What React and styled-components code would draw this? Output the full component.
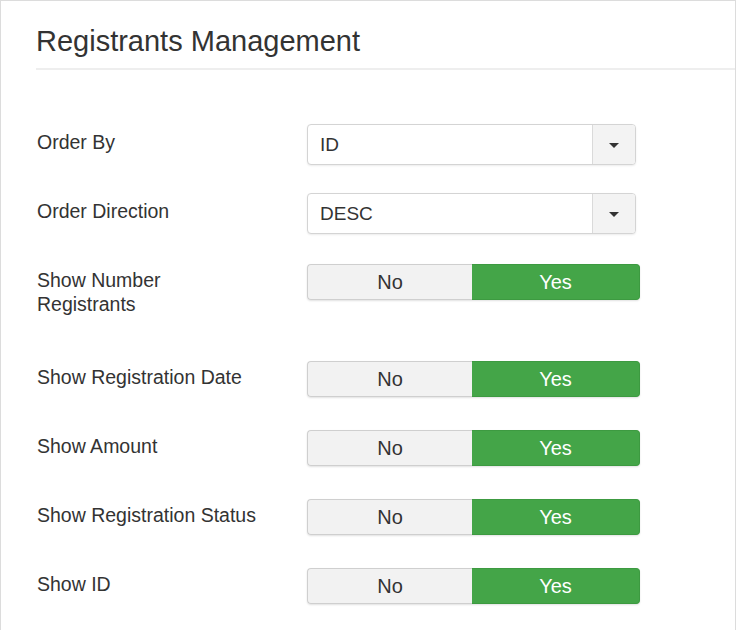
import React from "react";
import styled, { createGlobalStyle } from "styled-components";

const Global = createGlobalStyle`
  html, body { margin: 0; padding: 0; background: #fff; }
  body { font-family: "Liberation Sans", Arial, sans-serif; color: #333; }
`;

const Panel = styled.div`
  box-sizing: border-box;
  width: 736px;
  min-height: 700px;
  border: 1px solid #dcdcdc;
  padding-left: 35px;
`;

const Title = styled.h2`
  margin: 22px 0 0 0;
  padding-bottom: 9px;
  font-size: 29px;
  line-height: 36px;
  font-weight: normal;
  color: #333;
  border-bottom: 2px solid #eee;
`;

const Form = styled.div`
  padding-top: 54px;
  display: flex;
  flex-direction: column;
`;

const Row = styled.div`
  display: flex;
  align-items: flex-start;
  min-height: ${(p) => (p.$tall ? 69 : 41)}px;
  margin-bottom: 28px;
`;

const Label = styled.div`
  width: 271px;
  flex: none;
  box-sizing: border-box;
  padding: 6px ${(p) => (p.$wrap ? 120 : 20)}px 0 1px;
  font-size: 19.5px;
  line-height: 24px;
  color: #333;
`;

const Select = styled.div`
  box-sizing: border-box;
  width: 329px;
  height: 41px;
  display: flex;
  border: 1px solid #d4d4d4;
  border-radius: 4px;
  box-shadow: 0 1px 2px rgba(0, 0, 0, 0.08);
  overflow: hidden;
  background: #fff;
`;

const SelectValue = styled.div`
  flex: 1;
  padding-left: 12px;
  font-size: 19px;
  line-height: 39px;
  color: #333;
`;

const SelectArrow = styled.div`
  width: 42px;
  flex: none;
  background: #f3f3f3;
  border-left: 1px solid #dadada;
  display: flex;
  align-items: center;
  justify-content: center;
`;

const Caret = styled.span`
  width: 0;
  height: 0;
  border-left: 5px solid transparent;
  border-right: 5px solid transparent;
  border-top: 5px solid #333;
  margin-top: 1px;
`;

const Toggle = styled.div`
  margin-top: 2px;
  width: 333px;
  height: 36px;
  display: flex;
  border-radius: 4px;
  box-shadow: 0 1px 2px rgba(0, 0, 0, 0.12);
`;

const ToggleBtn = styled.div`
  box-sizing: border-box;
  width: ${(p) => (p.$on ? 168 : 165)}px;
  display: flex;
  align-items: center;
  justify-content: center;
  font-size: 20px;
  color: ${(p) => (p.$on ? "#fff" : "#333")};
  background: ${(p) => (p.$on ? "#44a548" : "#f2f2f2")};
  border: 1px solid ${(p) => (p.$on ? "#3d9a41" : "#cfcfcf")};
  border-radius: ${(p) => (p.$on ? "0 4px 4px 0" : "4px 0 0 4px")};
  ${(p) => (p.$on ? "border-left: none;" : "border-right: none;")}
`;

function SelectField({ value }) {
  return (
    <Select>
      <SelectValue>{value}</SelectValue>
      <SelectArrow>
        <Caret />
      </SelectArrow>
    </Select>
  );
}

function YesNo() {
  return (
    <Toggle>
      <ToggleBtn>No</ToggleBtn>
      <ToggleBtn $on>Yes</ToggleBtn>
    </Toggle>
  );
}

const toggles = [
  ["Show Number Registrants", true],
  ["Show Registration Date"],
  ["Show Amount"],
  ["Show Registration Status"],
  ["Show ID"],
];

export default function App() {
  return (
    <>
      <Global />
      <Panel>
        <Title>Registrants Management</Title>
        <Form>
          <Row>
            <Label>Order By</Label>
            <SelectField value="ID" />
          </Row>
          <Row>
            <Label>Order Direction</Label>
            <SelectField value="DESC" />
          </Row>
          {toggles.map(([label, tall]) => (
            <Row key={label} $tall={tall}>
              <Label $wrap={tall}>{label}</Label>
              <YesNo />
            </Row>
          ))}
        </Form>
      </Panel>
    </>
  );
}
